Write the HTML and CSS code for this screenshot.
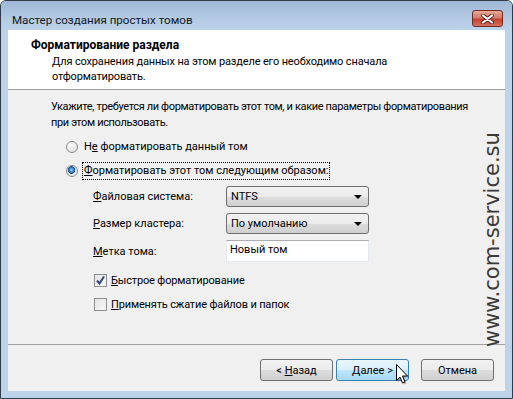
FILE: index.html
```html
<!DOCTYPE html>
<html>
  <head>
    <meta charset="utf-8">
    <title>Мастер создания простых томов</title>
    <link rel="stylesheet" href="styles.css">
  </head>
  <body>
    <div class="window">
      <div class="titlebar">
        <span class="caption">Мастер создания простых томов</span>
        <div class="close">
          <svg width="15" height="10" viewBox="0 0 15 10">
            <path d="M3 1.5 L12 8.5 M12 1.5 L3 8.5" stroke="#5a1f1a" stroke-width="4" stroke-linecap="round"/>
            <path d="M3 1.5 L12 8.5 M12 1.5 L3 8.5" stroke="#fff" stroke-width="2.2" stroke-linecap="round"/>
          </svg>
        </div>
      </div>

      <div class="client">
        <div class="header">
          <div class="header-title">Форматирование раздела</div>
          <div class="header-sub">Для сохранения данных на этом разделе его необходимо сначала<br>отформатировать.</div>
        </div>

        <div class="content">
          <p class="intro">Укажите, требуется ли форматировать этот том, и какие параметры форматирования<br>при этом использовать.</p>

          <div class="option">
            <span class="radio"></span>
            <span class="option-label">Н<u>е</u> форматировать данный том</span>
          </div>
          <div class="option">
            <span class="radio checked"></span>
            <span class="option-label focused"><u>Ф</u>орматировать этот том следующим образом:</span>
          </div>

          <div class="fields">
            <label><u>Ф</u>айловая система:</label>
            <div class="select"><span>NTFS</span><i class="arrow"></i></div>
            <label><u>Р</u>азмер кластера:</label>
            <div class="select"><span>По умолчанию</span><i class="arrow"></i></div>
            <label><u>М</u>етка тома:</label>
            <div class="textbox">Новый том</div>
          </div>

          <div class="check-row first">
            <span class="checkbox">
              <svg width="11" height="11" viewBox="0 0 11 11">
                <path d="M2 5.5 L4.5 8.5 L9 1.5" fill="none" stroke="#31477f" stroke-width="2"/>
              </svg>
            </span>
            <span><u>Б</u>ыстрое форматирование</span>
          </div>
          <div class="check-row">
            <span class="checkbox"></span>
            <span><u>П</u>рименять сжатие файлов и папок</span>
          </div>
        </div>

        <div class="footer">
          <button class="btn">&lt; <u>Н</u>азад</button>
          <button class="btn hot"><u>Д</u>алее &gt;</button>
          <button class="btn cancel">Отмена</button>
        </div>
      </div>

      <div class="watermark">www.com-service.su</div>

      <svg class="cursor" width="14" height="22" viewBox="0 0 14 22">
        <path d="M1.5 1.5 L1.5 17.5 L5 14 L7.5 20 L10 19 L7.5 13 L12.5 13 Z" fill="#000" opacity="0.25" transform="translate(1.5 1.5)"/>
        <path d="M1.5 1.5 L1.5 17.5 L5 14 L7.5 20 L10 19 L7.5 13 L12.5 13 Z" fill="#fff" stroke="#000" stroke-width="1"/>
      </svg>
    </div>
  </body>
</html>
```

FILE: styles.css
```css
body {
  margin: 0;
  background: #fff;
  font-family: Roboto, "Liberation Sans", sans-serif;
  font-size: 11px;
  color: #000;
}

.window {
  width: 513px;
  height: 399px;
  box-sizing: border-box;
  border: 1px solid #2e3b4b;
  border-radius: 6px 6px 0 0;
  background: #bcd3ea;
  display: flex;
  flex-direction: column;
  position: relative;
  overflow: hidden;
}

/* Title bar */
.titlebar {
  height: 29px;
  flex: none;
  display: flex;
  align-items: flex-start;
  padding: 0 9px 0 11px;
  background: linear-gradient(#9fb8d5, #b7cde6 70%, #bcd3ea);
}

.caption {
  padding-top: 11px;
  line-height: 16px;
  font-size: 11.6px;
  color: #101820;
}

.close {
  margin: 9px 0 0 auto;
  width: 31px;
  height: 17px;
  box-sizing: border-box;
  border: 1px solid #6e2a24;
  border-radius: 3px;
  background: linear-gradient(#e9a99a, #d47c6c 45%, #c2412f 55%, #d8715e);
  display: flex;
  align-items: center;
  justify-content: center;
}

/* Client area */
.client {
  flex: 1;
  margin: 0 7px 7px;
  display: flex;
  flex-direction: column;
  background: #f0f0f0;
}

.header {
  height: 60px;
  flex: none;
  box-sizing: border-box;
  padding: 8px 0 0 23px;
  background: #fff;
  border-bottom: 1px solid #a0a0a0;
  line-height: 15px;
}

.header-title {
  font-weight: bold;
  font-size: 12px;
}

.header-sub {
  padding: 1px 0 0 21px;
  letter-spacing: -0.15px;
}

.content {
  flex: 1;
  padding: 9px 0 0 43px;
}

.intro {
  margin: 0;
  line-height: 16px;
  letter-spacing: -0.35px;
}

.option {
  display: flex;
  align-items: center;
  height: 18px;
  margin: 6px 0 0 15px;
}

.option:first-of-type {
  margin-top: 7px;
}

.radio {
  width: 12px;
  height: 12px;
  box-sizing: border-box;
  border: 1px solid #8b8d8e;
  border-radius: 50%;
  background: radial-gradient(circle at 40% 35%, #fff, #e3e3e3 70%, #d0d0d0);
  margin-right: 4px;
}

.radio.checked {
  background: radial-gradient(circle at 45% 40%, #9fd6f8 0, #2d79c0 2.5px, #11427c 3.5px, #e6e6e6 4px, #f4f4f4);
}

.option-label {
  line-height: 16px;
  padding: 0 1px;
  border: 1px solid transparent;
}

.option-label.focused {
  border: 1px dotted #000;
}

.fields {
  display: grid;
  grid-template-columns: 133px 143px;
  grid-template-rows: 21px 21px 22px;
  row-gap: 6px;
  align-items: center;
  margin: 6px 0 0 42px;
}

.select {
  height: 21px;
  box-sizing: border-box;
  border: 1px solid #707070;
  border-radius: 3px;
  background: linear-gradient(#f2f2f2, #ebebeb 50%, #dddddd 51%, #cfcfcf);
  display: flex;
  align-items: center;
  padding: 0 6px 0 4px;
}

.select span {
  flex: 1;
}

.arrow {
  width: 0;
  height: 0;
  border-left: 4px solid transparent;
  border-right: 4px solid transparent;
  border-top: 4px solid #000;
}

.textbox {
  height: 22px;
  box-sizing: border-box;
  border: 1px solid #e3e9ef;
  border-top-color: #abadb3;
  background: #fff;
  padding: 1px 0 0 3px;
  line-height: 16px;
}

.check-row {
  display: flex;
  align-items: center;
  height: 18px;
  margin: 6px 0 0 43px;
  letter-spacing: -0.15px;
}

.check-row.first {
  margin-top: 9px;
}

.checkbox {
  width: 13px;
  height: 13px;
  box-sizing: border-box;
  border: 1px solid #8e8f8f;
  background: linear-gradient(135deg, #e2e2e2, #fbfbfb);
  margin-right: 4px;
  display: flex;
  align-items: center;
  justify-content: center;
}

/* Buttons */
.footer {
  height: 47px;
  flex: none;
  box-sizing: border-box;
  border-top: 1px solid #a0a0a0;
  display: flex;
  justify-content: flex-end;
  align-items: flex-start;
  padding: 14px 11px 0 0;
}

.btn {
  width: 73px;
  height: 22px;
  border: 1px solid #707070;
  border-radius: 3px;
  background: linear-gradient(#f2f2f2, #ebebeb 50%, #dddddd 51%, #cfcfcf);
  font-family: inherit;
  font-size: 11px;
  color: #000;
  padding: 0;
  margin-left: 3px;
}

.btn.hot {
  border-color: #3c7fb1;
  background: linear-gradient(#eaf6fd, #d9f0fc 50%, #bee6fd 51%, #a7d9f5);
}

.btn.cancel {
  margin-left: 12px;
}

/* Overlays */
.watermark {
  position: absolute;
  left: 481px;
  top: 346px;
  transform-origin: 0 0;
  transform: rotate(-90deg);
  font-family: "DejaVu Sans", sans-serif;
  font-size: 21px;
  line-height: 21px;
  color: #3a3a3a;
  white-space: nowrap;
}

.cursor {
  position: absolute;
  left: 394px;
  top: 362px;
}
```
